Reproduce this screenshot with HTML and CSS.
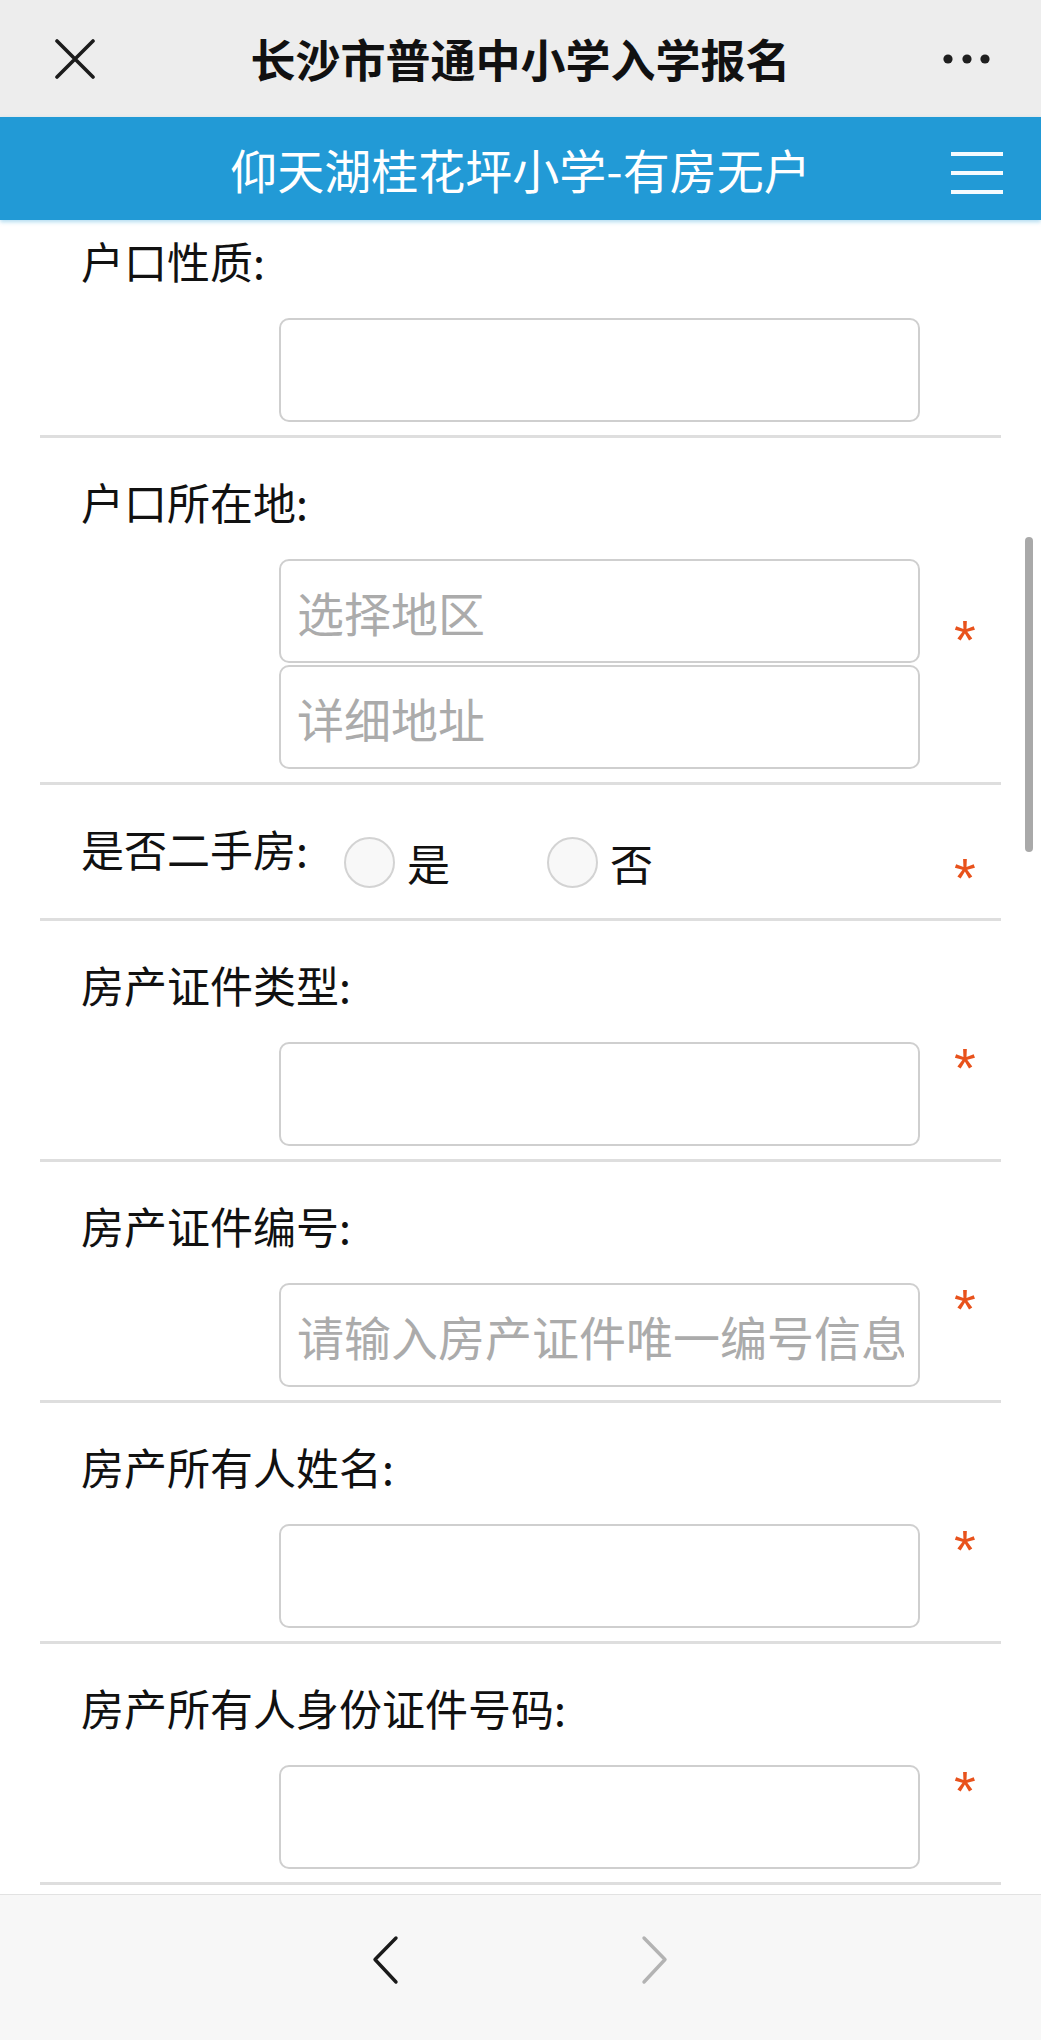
FILE: index.html
```html
<!DOCTYPE html>
<html lang="zh-CN">
<head>
<meta charset="utf-8">
<title>长沙市普通中小学入学报名</title>
<link rel="stylesheet" href="styles.css">
</head>
<body>
<header class="topbar">
  <div class="topbar__left">
    <svg class="icon-close" width="40" height="40" viewBox="0 0 40 40"><path d="M2 2 L38 38 M38 2 L2 38" stroke="#1c1c1c" stroke-width="3.6" stroke-linecap="round" fill="none"/></svg>
  </div>
  <h1 class="topbar__title">长沙市普通中小学入学报名</h1>
  <div class="topbar__right">
    <svg class="icon-more" width="53" height="12" viewBox="0 0 53 12"><circle cx="8" cy="6" r="4.6"/><circle cx="27" cy="6" r="4.6"/><circle cx="45" cy="6" r="4.6"/></svg>
  </div>
</header>
<nav class="subbar">
  <div class="subbar__left"></div>
  <h2 class="subbar__title">仰天湖桂花坪小学-有房无户</h2>
  <div class="subbar__right">
    <svg class="icon-menu" width="52" height="46" viewBox="0 0 52 46"><path d="M0 4 H52 M0 23 H52 M0 42 H52" stroke="#f4fbff" stroke-width="4" fill="none"/></svg>
  </div>
</nav>
<main class="form">
  <div class="row row--first">
    <div class="label">户口性质:</div>
    <div class="field">
      <input class="input" type="text">
    </div>
  </div>
  <div class="row">
    <div class="label">户口所在地:</div>
    <div class="field">
      <div class="stack">
        <input class="input" type="text" placeholder="选择地区">
        <input class="input" type="text" placeholder="详细地址">
      </div>
      <span class="req req--stack">*</span>
    </div>
  </div>
  <div class="row row--inline">
    <div class="label label--inline">是否二手房:</div>
    <div class="radio radio--first"><span class="radio__dot"></span><span class="radio__text">是</span></div>
    <div class="radio"><span class="radio__dot"></span><span class="radio__text">否</span></div>
    <span class="req req--inline">*</span>
  </div>
  <div class="row">
    <div class="label">房产证件类型:</div>
    <div class="field">
      <input class="input" type="text">
      <span class="req">*</span>
    </div>
  </div>
  <div class="row">
    <div class="label">房产证件编号:</div>
    <div class="field">
      <input class="input" type="text" placeholder="请输入房产证件唯一编号信息">
      <span class="req">*</span>
    </div>
  </div>
  <div class="row">
    <div class="label">房产所有人姓名:</div>
    <div class="field">
      <input class="input" type="text">
      <span class="req">*</span>
    </div>
  </div>
  <div class="row">
    <div class="label">房产所有人身份证件号码:</div>
    <div class="field">
      <input class="input" type="text">
      <span class="req">*</span>
    </div>
  </div>
</main>
<footer class="bottombar">
  <svg class="chev" width="30" height="50" viewBox="0 0 30 50"><path d="M25 3 L4 24.5 L25 47" stroke="#1a1a1a" stroke-width="3.4" stroke-linecap="round" stroke-linejoin="round" fill="none"/></svg>
  <svg class="chev" width="30" height="50" viewBox="0 0 30 50"><path d="M4 3 L25 24.5 L4 47" stroke="#b3b3b3" stroke-width="3.4" stroke-linecap="round" stroke-linejoin="round" fill="none"/></svg>
</footer>
<div class="scrollbar"></div>
</body>
</html>
```
FILE: styles.css
```css
* { box-sizing: border-box; }
html, body { margin: 0; padding: 0; }
body {
  position: relative;
  width: 1041px;
  height: 2040px;
  overflow: hidden;
  background: #ffffff;
  font-family: "Noto Sans CJK SC", "Noto Sans", sans-serif;
  color: #111111;
}

/* top WeChat-like bar */
.topbar {
  height: 117px;
  background: #ededed;
  display: grid;
  grid-template-columns: 1fr auto 1fr;
  align-items: center;
}
.topbar__left { display: flex; align-items: center; padding-left: 55px; }
.icon-close { display: block; }
.topbar__title {
  margin: 0;
  font-size: 45px;
  font-weight: 600;
  line-height: 60px;
  color: #111;
  letter-spacing: 0;
}
.topbar__right { display: flex; justify-content: flex-end; padding-right: 48px; }
.icon-more { display: block; fill: #1f1f1f; }

/* blue page title bar */
.subbar {
  position: relative;
  height: 103px;
  background: #229ad6;
  display: grid;
  grid-template-columns: 1fr auto 1fr;
  align-items: center;
  box-shadow: 0 2px 4px rgba(34, 154, 214, 0.35);
  z-index: 1;
}
.subbar__title {
  margin: 0;
  font-size: 47px;
  font-weight: 400;
  line-height: 60px;
  color: #ffffff;
}
.subbar__right {
  display: flex;
  justify-content: flex-end;
  align-self: start;
  padding-top: 33px;
  padding-right: 38px;
}
.icon-menu { display: block; }

/* form */
.form {
  height: 1674px;
  overflow: hidden;
}
.row {
  margin: 0 40px;
  padding: 35px 0 13px;
  border-bottom: 3px solid #dedede;
}
.row--first { padding-top: 12px; }
.label {
  margin-left: 41px;
  font-size: 43px;
  line-height: 56px;
  color: #111;
}
.field {
  display: flex;
  align-items: flex-start;
  margin-left: 239px;
  margin-top: 30px;
}
.stack {
  display: flex;
  flex-direction: column;
  gap: 2px;
}
.input {
  display: block;
  width: 641px;
  height: 104px;
  margin: 0;
  padding: 0 14px 0 16px;
  border: 2px solid #cfcfcf;
  border-radius: 10px;
  background: #fff;
  font-family: "Noto Sans CJK SC", "Noto Sans", sans-serif;
  font-size: 47px;
  color: #111;
  outline: none;
  -webkit-appearance: none;
  appearance: none;
}
.input::placeholder { color: #ababab; }

.req {
  display: block;
  width: 30px;
  height: 56px;
  margin-left: 30px;
  margin-top: -2px;
  text-align: center;
  font-family: "Liberation Sans", "DejaVu Sans", sans-serif;
  font-size: 56px;
  line-height: 56px;
  color: #e8521c;
}
.req--stack { margin-top: 53px; }

/* inline radio row */
.row--inline {
  display: flex;
  align-items: flex-start;
  height: 136px;
  padding-bottom: 0;
  padding-right: 21px;
}
.label--inline { width: 263px; flex: none; }
.radio {
  display: flex;
  align-items: center;
  height: 51px;
  margin-top: 17px;
  gap: 12px;
}
.radio--first { width: 203px; flex: none; }
.radio__dot {
  width: 51px;
  height: 51px;
  border-radius: 50%;
  border: 2px solid #d3d3d3;
  background: #f8f8f8;
  flex: none;
}
.radio__text {
  font-size: 43px;
  line-height: 51px;
  color: #111;
}
.req--inline { margin-left: auto; margin-top: 30px; }

/* bottom navigation */
.bottombar {
  height: 146px;
  background: #f7f7f7;
  border-top: 1px solid #e2e2e2;
  display: flex;
  justify-content: center;
  align-items: flex-start;
  gap: 239px;
  padding-top: 40px;
}
.chev { display: block; }

/* overlay scrollbar */
.scrollbar {
  position: absolute;
  left: 1025px;
  top: 537px;
  width: 8px;
  height: 315px;
  border-radius: 4px;
  background: #a9a9a9;
}
```
